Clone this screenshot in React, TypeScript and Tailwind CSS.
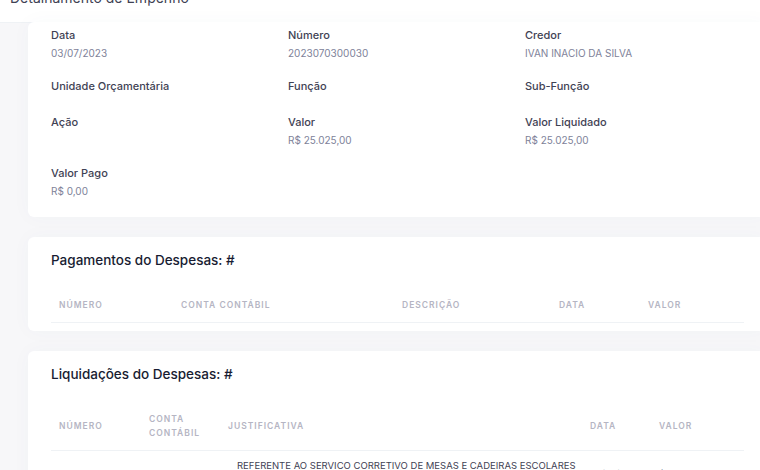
import React from 'react';

const FIELDS = [
  { label: 'Data', value: '03/07/2023' },
  { label: 'Número', value: '2023070300030' },
  { label: 'Credor', value: 'IVAN INACIO DA SILVA' },
  { label: 'Unidade Orçamentária', value: '' },
  { label: 'Função', value: '' },
  { label: 'Sub-Função', value: '' },
  { label: 'Ação', value: '' },
  { label: 'Valor', value: 'R$ 25.025,00' },
  { label: 'Valor Liquidado', value: 'R$ 25.025,00' },
  { label: 'Valor Pago', value: 'R$ 0,00' },
];

const Th: React.FC<{ children: React.ReactNode }> = ({ children }) => (
  <th className="py-[10px] pl-[8px] text-left align-middle text-[8.5px] leading-[14px] font-semibold tracking-[1px] uppercase text-[#b5b5c3]">
    {children}
  </th>
);

const Card: React.FC<{ className?: string; children: React.ReactNode }> = ({ className = '', children }) => (
  <div className={`w-[739px] bg-white rounded-[6px] shadow-[0_0_20px_0_rgba(76,87,125,0.03)] px-[23px] ${className}`}>
    {children}
  </div>
);

export default function App() {
  return (
    <div className="w-[760px] h-[470px] overflow-hidden bg-[#f7f7f9] font-['Inter','Noto_Sans',sans-serif]">
      {/* page header, mostly scrolled off */}
      <div className="h-[23px] overflow-hidden bg-white border-b border-[#eff2f5] pl-[10px]">
        <h1 className="-mt-[11px] text-[14px] leading-[18px] font-normal text-[#3f4254]">Detalhamento de Empenho</h1>
      </div>

      <div className="pl-[28px] flex flex-col gap-[20px]">
        {/* dados do empenho */}
        <Card className="-mt-[1px] pt-[4px] pb-[2px]">
          <div className="grid grid-cols-[237px_237px_1fr]">
            {FIELDS.map((f) => (
              <div key={f.label} className="mb-[18px]">
                <div className="text-[11px] leading-[18px] font-medium text-[#3f4254]">{f.label}</div>
                {f.value && (
                  <div className="mt-[4px] text-[10px] leading-[11px] text-[#7e8299]">{f.value}</div>
                )}
              </div>
            ))}
          </div>
        </Card>

        {/* pagamentos */}
        <Card className="pt-[12px] pb-[8px]">
          <h3 className="text-[13.5px] leading-[22px] font-medium text-[#181c32]">Pagamentos do Despesas: #</h3>
          <table className="mt-[17px] w-[693px] table-fixed border-collapse">
            <colgroup>
              <col className="w-[122px]" />
              <col className="w-[221px]" />
              <col className="w-[157px]" />
              <col className="w-[89px]" />
              <col className="w-[104px]" />
            </colgroup>
            <thead>
              <tr className="border-b border-[#eff2f5]">
                <Th>Número</Th>
                <Th>Conta Contábil</Th>
                <Th>Descrição</Th>
                <Th>Data</Th>
                <Th>Valor</Th>
              </tr>
            </thead>
          </table>
        </Card>

        {/* liquidações */}
        <Card className="pt-[12px] pb-[20px]">
          <h3 className="text-[13.5px] leading-[22px] font-medium text-[#181c32]">Liquidações do Despesas: #</h3>
          <table className="mt-[17px] w-[693px] table-fixed border-collapse">
            <colgroup>
              <col className="w-[90px]" />
              <col className="w-[79px]" />
              <col className="w-[362px]" />
              <col className="w-[69px]" />
              <col className="w-[93px]" />
            </colgroup>
            <thead>
              <tr className="border-b border-[#eff2f5]">
                <Th>Número</Th>
                <Th>
                  Conta
                  <br />
                  Contábil
                </Th>
                <Th>Justificativa</Th>
                <Th>Data</Th>
                <Th>Valor</Th>
              </tr>
            </thead>
            <tbody className="text-[9.5px] leading-[15px] text-[#3f4254]">
              <tr>
                <td className="pt-[7px] pb-[6px] pl-0 align-middle">2023070400067</td>
                <td className="pt-[7px] pb-[6px] pl-[1px] align-middle">000100000</td>
                <td className="pt-[7px] pb-[6px] pl-[17px] align-middle whitespace-nowrap">
                  REFERENTE AO SERVICO CORRETIVO DE MESAS E CADEIRAS ESCOLARES
                  <br />
                  DA REDE MUNICIPAL DE ENSINO
                </td>
                <td className="pt-[7px] pb-[6px] pl-[7px] align-middle text-[#5e6278]">04/07/2023</td>
                <td className="pt-[7px] pb-[6px] pl-[2px] align-middle text-[#5e6278]">R$ 25.025,00</td>
              </tr>
            </tbody>
          </table>
        </Card>
      </div>
    </div>
  );
}
